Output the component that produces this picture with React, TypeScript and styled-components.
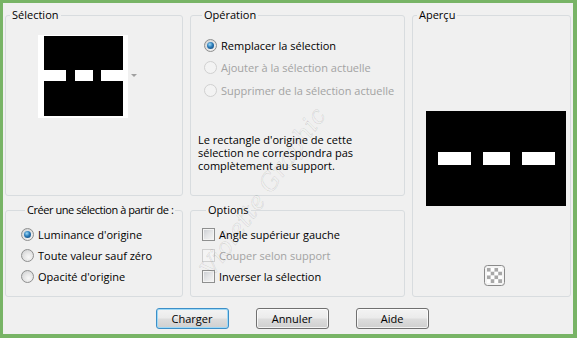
import React from "react";
import styled, { createGlobalStyle } from "styled-components";

const Global = createGlobalStyle`
  html, body { margin: 0; padding: 0; background: #f0f0f0; }
  body { font-family: "Open Sans", "Noto Sans", sans-serif; font-size: 11px; color: #000; }
`;

const Frame = styled.div`
  position: relative;
  box-sizing: border-box;
  width: 577px;
  height: 338px;
  border: solid #78b466;
  border-width: 3px 4px 4px 3px;
  background: #f0f0f0;
  padding: 4px 2px 0 2px;
  display: flex;
  flex-direction: column;
  overflow: hidden;
`;

const Groups = styled.div`
  display: grid;
  grid-template-columns: 178px 215px 159px;
  grid-template-rows: 189px 95px;
  column-gap: 7px;
  row-gap: 6px;
`;

const Group = styled.fieldset<{ $col: number; $row: string; $pad: string }>`
  grid-column: ${(p) => p.$col};
  grid-row: ${(p) => p.$row};
  margin: 0;
  padding: ${(p) => p.$pad};
  min-width: 0;
  border: 1px solid #d8dcdf;
  border-radius: 3px;
  display: flex;
  flex-direction: column;
  align-items: flex-start;
`;

const Title = styled.legend<{ $tight?: boolean }>`
  margin-left: 4px;
  padding: 0 2px;
  line-height: 16px;
  font-size: 11px;
  white-space: nowrap;
  max-width: none;
  letter-spacing: ${(p) => (p.$tight ? "-0.45px" : "normal")};
`;

const ThumbRow = styled.div`
  display: flex;
  align-items: center;
  margin-left: 32px;
  gap: 3px;
`;

const Arrow = styled.span`
  width: 0;
  height: 0;
  border-left: 3px solid transparent;
  border-right: 3px solid transparent;
  border-top: 3px solid #a0a0a0;
  margin-top: -3px;
`;

const Choice = styled.label<{ $disabled?: boolean; $h: number; $gap: number; $indent?: number }>`
  display: flex;
  align-items: center;
  gap: ${(p) => p.$gap}px;
  height: ${(p) => p.$h}px;
  margin-left: ${(p) => p.$indent ?? 0}px;
  white-space: nowrap;
  color: ${(p) => (p.$disabled ? "#a3a3a3" : "#000")};
`;

const Radio = styled.span<{ $checked?: boolean; $disabled?: boolean }>`
  flex: none;
  width: 13px;
  height: 13px;
  box-sizing: border-box;
  border-radius: 50%;
  border: 1px solid ${(p) => (p.$disabled ? "#d0d0d0" : "#8e8f8f")};
  background: ${(p) =>
    p.$disabled
      ? "#f3f3f3"
      : "radial-gradient(circle at 60% 65%, #f8f8f8 0%, #e6e6e6 45%, #c9cbcd 100%)"};
  display: flex;
  align-items: center;
  justify-content: center;
  &::after {
    content: "";
    display: ${(p) => (p.$checked ? "block" : "none")};
    width: 7px;
    height: 7px;
    border-radius: 50%;
    background: radial-gradient(circle at 40% 35%, #9fdcf8 0%, #2a7ab8 45%, #0d3d6b 100%);
  }
`;

const Check = styled.span<{ $disabled?: boolean }>`
  flex: none;
  width: 13px;
  height: 13px;
  box-sizing: border-box;
  border: 1px solid ${(p) => (p.$disabled ? "#cfcfcf" : "#8e8f8f")};
  box-shadow: inset 0 0 0 1px #f4f4f4;
  background: ${(p) =>
    p.$disabled ? "#f4f4f4" : "linear-gradient(135deg, #c9ccd1 0%, #e4e5e7 50%, #f6f6f6 100%)"};
`;

const Note = styled.p`
  margin: 32px 0 0 0;
  line-height: 13px;
  font-size: 11px;
`;

const Preview = styled.svg`
  display: block;
  margin: 88px 0 0 13px;
`;

const Transparency = styled.svg`
  display: block;
  margin: 59px 0 0 71px;
`;

const ButtonRow = styled.div`
  display: flex;
  justify-content: center;
  gap: 27px;
  margin-top: 11px;
  padding-left: 8px;
`;

const Button = styled.button<{ $default?: boolean }>`
  width: 73px;
  height: 21px;
  box-sizing: border-box;
  padding: 0;
  font-family: inherit;
  font-size: 11px;
  color: #000;
  border: 1px solid ${(p) => (p.$default ? "#3c8fc8" : "#707070")};
  border-radius: 3px;
  background: linear-gradient(#f3f3f3 0%, #ebebeb 48%, #dddddd 52%, #cfcfcf 100%);
  box-shadow: inset 0 0 0 1px ${(p) => (p.$default ? "#9fd9f6" : "rgba(255,255,255,0.75)")};
`;

const Watermark = styled.div`
  position: absolute;
  left: 150px;
  top: 175px;
  width: 220px;
  text-align: center;
  transform: rotate(-55deg);
  font-family: "DejaVu Serif", serif;
  font-style: italic;
  font-size: 24px;
  color: transparent;
  -webkit-text-stroke: 0.6px rgba(0, 0, 0, 0.12);
  pointer-events: none;
  white-space: nowrap;
`;

export default function App() {
  return (
    <>
      <Global />
      <Frame>
        <Groups>
          <Group $col={1} $row="1" $pad="12px 0 0 0">
            <Title>Sélection</Title>
            <ThumbRow>
              <svg width="90" height="83" viewBox="0 0 90 83">
                <rect width="90" height="83" fill="#fff" />
                <rect x="6" y="1" width="79" height="80" fill="#000" />
                <rect x="0" y="35" width="28" height="11" fill="#fff" />
                <rect x="37" y="35" width="18" height="11" fill="#fff" />
                <rect x="63" y="35" width="27" height="11" fill="#fff" />
              </svg>
              <Arrow />
            </ThumbRow>
          </Group>

          <Group $col={2} $row="1" $pad="11px 0 0 7px">
            <Title>Opération</Title>
            <Choice $h={22} $gap={4} $indent={6}>
              <Radio $checked />
              Remplacer la sélection
            </Choice>
            <Choice $h={23} $gap={4} $indent={6} $disabled>
              <Radio $disabled />
              Ajouter à la sélection actuelle
            </Choice>
            <Choice $h={22} $gap={4} $indent={6} $disabled>
              <Radio $disabled />
              Supprimer de la sélection actuelle
            </Choice>
            <Note>
              Le rectangle d'origine de cette
              <br />
              sélection ne correspondra pas
              <br />
              complètement au support.
            </Note>
          </Group>

          <Group $col={3} $row="1 / span 2" $pad="0">
            <Title>Aperçu</Title>
            <Preview width="140" height="95" viewBox="0 0 140 95">
              <rect width="140" height="95" fill="#000" />
              <rect x="12" y="41" width="33" height="13" fill="#fff" />
              <rect x="57" y="41" width="27" height="13" fill="#fff" />
              <rect x="96" y="41" width="33" height="13" fill="#fff" />
            </Preview>
            <Transparency width="21" height="21" viewBox="0 0 21 21">
              <rect x="0.5" y="0.5" width="20" height="20" rx="3" fill="#f4f4f4" stroke="#8a8a8a" />
              {[0, 1, 2, 3].flatMap((r) =>
                [0, 1, 2, 3].map((c) => (
                  <rect
                    key={`${r}-${c}`}
                    x={3 + c * 3.75}
                    y={3 + r * 3.75}
                    width="3.75"
                    height="3.75"
                    fill={(r + c) % 2 === 0 ? "#a8a8a8" : "#ffffff"}
                  />
                ))
              )}
            </Transparency>
          </Group>

          <Group $col={1} $row="2" $pad="6px 0 0 15px">
            <Title $tight>Créer une sélection à partir de :</Title>
            <Choice $h={21} $gap={4}>
              <Radio $checked />
              Luminance d'origine
            </Choice>
            <Choice $h={21} $gap={4}>
              <Radio />
              Toute valeur sauf zéro
            </Choice>
            <Choice $h={21} $gap={4}>
              <Radio />
              Opacité d'origine
            </Choice>
          </Group>

          <Group $col={2} $row="2" $pad="6px 0 0 11px">
            <Title>Options</Title>
            <Choice $h={21} $gap={4}>
              <Check />
              Angle supérieur gauche
            </Choice>
            <Choice $h={21} $gap={4} $disabled>
              <Check $disabled />
              Couper selon support
            </Choice>
            <Choice $h={21} $gap={4}>
              <Check />
              Inverser la sélection
            </Choice>
          </Group>
        </Groups>

        <ButtonRow>
          <Button $default>Charger</Button>
          <Button>Annuler</Button>
          <Button>Aide</Button>
        </ButtonRow>

        <Watermark>Violette Graphic</Watermark>
      </Frame>
    </>
  );
}
